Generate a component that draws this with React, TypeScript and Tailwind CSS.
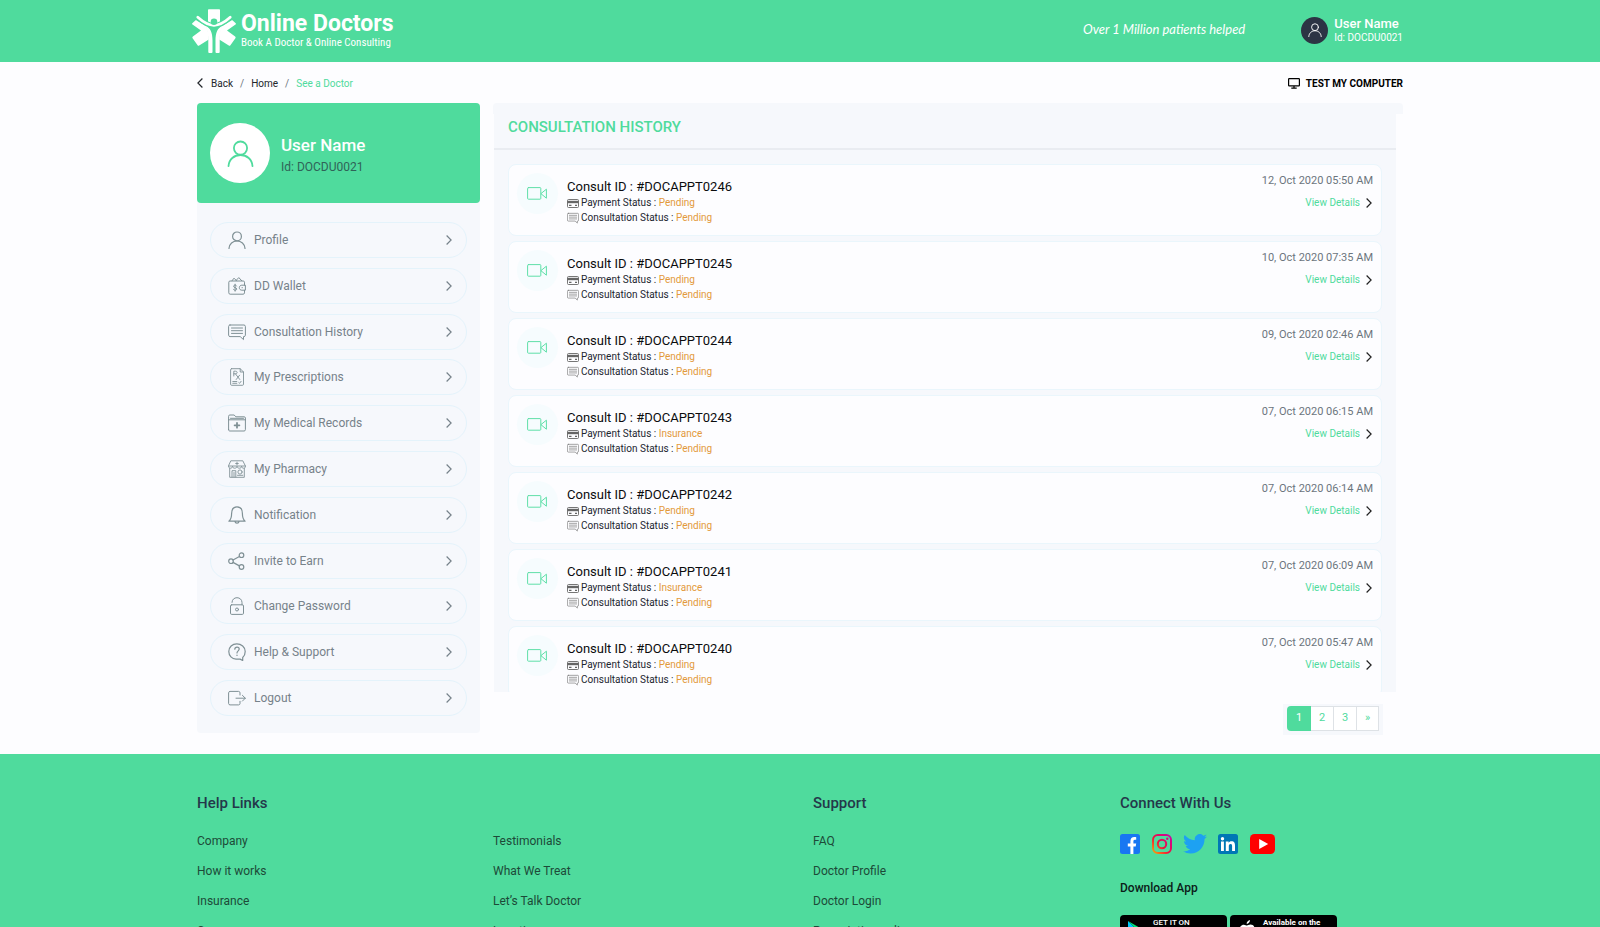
import React from "react";

type IconProps = { className?: string };

const stroke = {
  fill: "none",
  stroke: "currentColor",
  strokeWidth: 1.2,
  strokeLinecap: "round" as const,
  strokeLinejoin: "round" as const,
};

function UserIcon({ className }: IconProps) {
  return (
    <svg viewBox="0 0 18 18" className={className} {...stroke} aria-hidden="true">
      <circle cx="9" cy="5.4" r="4.4" />
      <path d="M1 17.4c.3-4.600 3.800-7.400 8-7.400s7.700 2.800 8 7.400" />
    </svg>
  );
}

function WalletIcon({ className }: IconProps) {
  return (
    <svg viewBox="0 0 18 18" className={className} {...stroke} strokeWidth={1} aria-hidden="true">
      <path d="M16.500 8.200V5.200c0-.7-.5-1.200-1.200-1.200H2C1.200 4 .8 4.500.8 5.200v10.600c0 .8.5 1.400 1.300 1.400h13c.8 0 1.400-.5 1.400-1.300v-2.600" />
      <path d="M17 8.200h-3.200c-1.400 0-2.500 1.100-2.500 2.500s1.100 2.500 2.500 2.500H17zM14 10.700h.4M4 3.800l2-2.600 2.600 2.600M8.200 3.300l2.600-2.700 3 3.200" />
      <path d="M8.600 9c-.3-.6-.8-.9-1.500-.9-.9 0-1.500.5-1.500 1.200 0 1.700 3.100.9 3.100 2.700 0 .8-.7 1.300-1.600 1.300-.8 0-1.400-.4-1.600-1M7.100 7.200v7" />
    </svg>
  );
}

function ChatIcon({ className }: IconProps) {
  return (
    <svg viewBox="0 0 18 18" className={className} {...stroke} strokeWidth={1} aria-hidden="true">
      <path d="M2 2h14c.8 0 1.400.6 1.400 1.400v8.800c0 .8-.6 1.400-1.400 1.400h-.5v3l-3.300-3H2c-.8 0-1.400-.6-1.400-1.400V3.400C.6 2.600 1.200 2 2 2z" />
      <path d="M3.500 5h11M3.500 7.700h11M3.500 10.400h11" />
    </svg>
  );
}

function PrescriptionIcon({ className }: IconProps) {
  return (
    <svg viewBox="0 0 18 18" className={className} {...stroke} strokeWidth={0.9} aria-hidden="true">
      <path d="M3.600.7h8.600l3.300 3.300v12.300c0 .6-.4 1-1 1H3.600c-.6 0-1-.4-1-1V1.700c0-.6.4-1 1-1zM12.200.7V4h3.300" />
      <path d="M5.800 8V3.200h1.700c1 0 1.600.5 1.600 1.300s-.6 1.300-1.600 1.300H5.800M7.400 5.800l4.400 5.700M11.600 7.200l-3.400 4.300M4.800 13.500h4M4.800 15.300h4M10.800 14.600l.8.7 1.500-2" />
    </svg>
  );
}

function RecordsIcon({ className }: IconProps) {
  return (
    <svg viewBox="0 0 18 18" className={className} {...stroke} strokeWidth={1} aria-hidden="true">
      <path d="M.6 15.700V2.300C.6 1.500 1 1 1.800 1h4.400l1.600 1.800h8.400c.7 0 1.200.5 1.200 1.200v11.700c0 .8-.5 1.300-1.300 1.300H1.900c-.8 0-1.300-.5-1.300-1.300zM.6 5.800h16.800M2.500 4.300h13" />
      <path d="M9 8.900v4.800M6.600 11.300h4.800" strokeWidth="1.800" />
    </svg>
  );
}

function PharmacyIcon({ className }: IconProps) {
  return (
    <svg viewBox="0 0 18 18" className={className} {...stroke} strokeWidth={0.9} aria-hidden="true">
      <path d="M3.200.8h11.600l2.700 5.400c0 1.300-.7 2-1.900 2s-2-.8-2-1.900c0 1.100-.9 1.900-2.200 1.900S9 7.400 9 6.300c0 1.100-1 1.900-2.300 1.900S4.500 7.400 4.500 6.300c0 1.100-.8 1.900-2 1.900S.5 7.500.5 6.200z" />
      <path d="M1.700 8.500v8.800h14.600V8.500M.7 6h16.600M9 2.200v2.600M7.700 3.500h2.600M4 17v-6.300h3.800V17M6 12.500V17" />
      <circle cx="12" cy="12" r="2.100" />
      <path d="M9.500 15.300h5.300" />
    </svg>
  );
}

function BellIcon({ className }: IconProps) {
  return (
    <svg viewBox="0 0 18 18" className={className} {...stroke} aria-hidden="true">
      <path d="M.9 15.200c2.200-1.700 2.700-3.300 2.700-7.600C3.600 3.400 5.600.9 9 .9s5.400 2.500 5.400 6.700c0 4.300.5 5.900 2.700 7.600zM7 15.600c.3 1.900 3.700 1.900 4 0" />
    </svg>
  );
}

function ShareIcon({ className }: IconProps) {
  return (
    <svg viewBox="0 0 18 18" className={className} {...stroke} aria-hidden="true">
      <circle cx="3" cy="9.200" r="2.300" />
      <circle cx="13.500" cy="3.200" r="2.300" />
      <circle cx="13.500" cy="15" r="2.300" />
      <path d="M5 8l6.400-3.600M5 10.400l6.400 3.500" />
    </svg>
  );
}

function LockIcon({ className }: IconProps) {
  return (
    <svg viewBox="0 0 18 18" className={className} {...stroke} strokeWidth={1} aria-hidden="true">
      <rect x="2.500" y="7.800" width="13" height="9.600" rx="1.200" />
      <path d="M4 5.400C4 2.600 6.200.7 9 .7s5 2 5 4.800v2.300" />
      <circle cx="9" cy="12.500" r="1.500" />
    </svg>
  );
}

function HelpIcon({ className }: IconProps) {
  return (
    <svg viewBox="0 0 18 18" className={className} {...stroke} aria-hidden="true">
      <path d="M14.700 14.500v3l-2.600-1.400H8C4 16 .8 12.800.8 8.500 .8 4 4.300.8 8.800.8s8.400 3.400 8.400 7.600c0 2.600-.9 4.600-2.500 6.100z" />
      <path d="M6.800 6.200c0-1.300.9-2.100 2.200-2.100s2.200.8 2.200 2c0 1.700-2.200 1.800-2.200 3.800M9 12.200v.2" />
    </svg>
  );
}

function LogoutIcon({ className }: IconProps) {
  return (
    <svg viewBox="0 0 18 18" className={className} {...stroke} strokeWidth={1} aria-hidden="true">
      <path d="M12 6V3.800c0-.8-.5-1.400-1.400-1.400H2c-.8 0-1.400.6-1.400 1.400v10.700c0 .8.6 1.400 1.400 1.400h8.600c.9 0 1.400-.6 1.400-1.400v-2.200M8 9.200h9.300M14.400 6.300l2.900 2.900-2.900 2.900" />
    </svg>
  );
}

function CardIcon({ className }: IconProps) {
  return (
    <svg viewBox="0 0 12 9" className={className} aria-hidden="true">
      <rect x=".5" y=".5" width="11" height="8" rx="1" fill="none" stroke="currentColor" strokeWidth=".9" />
      <path d="M.5 1.800h11v2.400H.5z" fill="currentColor" />
      <path d="M2 6.300h2.500M8 6.300h2" stroke="currentColor" strokeWidth="1.200" />
    </svg>
  );
}

function CameraIcon({ className }: IconProps) {
  return (
    <svg viewBox="0 0 20 13" className={className} {...stroke} strokeWidth={1} aria-hidden="true">
      <rect x=".6" y=".6" width="13.200" height="11.600" rx=".8" />
      <path d="M14.200 6.400l5.200-4.200v8.600z" />
    </svg>
  );
}

function Chevron({ className, left }: IconProps & { left?: boolean }) {
  return (
    <svg viewBox="0 0 6 10" className={className} fill="none" stroke="currentColor" strokeWidth="1.200" aria-hidden="true">
      <path d={left ? "M5.400.5L.9 5l4.500 4.500" : "M.6.5L5.100 5 .6 9.500"} />
    </svg>
  );
}

function Logo({ className }: IconProps) {
  const half =
    "M.3 14.300L3.300 11.500c.4-.3.8-.3 1.300 0L14 17.200c1.900 3.300 2.800 8 2.800 13.300L7.200 36.600c-.7.400-1.200.3-1.600-.4L.6 29.200c-.4-.7-.3-1.100.3-1.600L9 21.500.5 15.600c-.5-.4-.6-.9-.2-1.300z";
  const leg =
    "M13.500 16.800c5 2.200 7 7 7 14.700V43c0 .6-.3.9-.9.9h-2.400c-.6 0-.9-.3-.9-.9V31c0-5-.9-9.500-2.800-14.200z";
  return (
    <svg viewBox="0 0 44 44" className={className} aria-hidden="true">
      <g fill="#fff">
        <path d="M17 .3h10c.6 0 1 .4 1 1V13c-2 1.200-4 2-6 2.600-2-.6-4-1.400-6-2.600V1.300c0-.6.4-1 1-1z" />
        <path d={half} />
        <path d={leg} />
        <g transform="matrix(-1 0 0 1 44 0)">
          <path d={half} />
          <path d={leg} />
        </g>
      </g>
      <path d="M5.800 8.300C11 13 16.500 16.300 22 16.300S33 13 38.200 8.300" fill="none" stroke="#4fdb9d" strokeWidth="5" />
      <path d="M5.800 8.300C11 13 16.500 16.300 22 16.300S33 13 38.200 8.300" fill="none" stroke="#fff" strokeWidth="2.800" strokeLinecap="round" />
      <circle cx="22" cy="12.700" r="3.300" fill="#4fdb9d" />
    </svg>
  );
}

const menu = [
  { label: "Profile", Icon: UserIcon },
  { label: "DD Wallet", Icon: WalletIcon },
  { label: "Consultation History", Icon: ChatIcon },
  { label: "My Prescriptions", Icon: PrescriptionIcon },
  { label: "My Medical Records", Icon: RecordsIcon },
  { label: "My Pharmacy", Icon: PharmacyIcon },
  { label: "Notification", Icon: BellIcon },
  { label: "Invite to Earn", Icon: ShareIcon },
  { label: "Change Password", Icon: LockIcon },
  { label: "Help & Support", Icon: HelpIcon },
  { label: "Logout", Icon: LogoutIcon },
];

const consultations = [
  { id: "#DOCAPPT0246", payment: "Pending", date: "12, Oct 2020 05:50 AM" },
  { id: "#DOCAPPT0245", payment: "Pending", date: "10, Oct 2020 07:35 AM" },
  { id: "#DOCAPPT0244", payment: "Pending", date: "09, Oct 2020 02:46 AM" },
  { id: "#DOCAPPT0243", payment: "Insurance", date: "07, Oct 2020 06:15 AM" },
  { id: "#DOCAPPT0242", payment: "Pending", date: "07, Oct 2020 06:14 AM" },
  { id: "#DOCAPPT0241", payment: "Insurance", date: "07, Oct 2020 06:09 AM" },
  { id: "#DOCAPPT0240", payment: "Pending", date: "07, Oct 2020 05:47 AM" },
];

function Header() {
  return (
    <header className="bg-[#4fdb9d] text-white">
      <div className="mx-auto flex h-[62px] max-w-[1216px] items-center pr-[5px]">
        <a href="#" className="flex items-center gap-[5px]">
          <Logo className="h-11 w-11" />
          <span className="flex flex-col">
            <span className="text-[23px] leading-6 font-bold">Online Doctors</span>
            <span className="pb-px font-['Roboto_Condensed','Liberation_Sans_Narrow',Roboto,sans-serif] text-[11px] leading-[14px]">
              Book A Doctor &amp; Online Consulting
            </span>
          </span>
        </a>
        <p className="mr-[56px] ml-auto pb-[2px] font-[Lato,sans-serif] text-[13px] italic">Over 1 Million patients helped</p>
        <a href="#" className="flex items-center gap-[6px] pb-[2px]">
          <span className="flex h-[27px] w-[27px] items-center justify-center rounded-full bg-[#2c3444]">
            <UserIcon className="h-[14px] w-[14px]" />
          </span>
          <span className="flex flex-col">
            <span className="text-[13px] leading-4 font-medium">User Name</span>
            <span className="text-[10px] leading-3">Id: DOCDU0021</span>
          </span>
        </a>
      </div>
    </header>
  );
}

function Sidebar() {
  return (
    <aside className="flex h-[630px] w-[283px] shrink-0 flex-col rounded bg-[#f6f8fc]">
      <div className="flex h-[100px] items-center gap-[11px] rounded bg-[#4fdb9d] px-[13px]">
        <span className="flex h-[60px] w-[60px] items-center justify-center rounded-full bg-white text-[#4fdb9d]">
          <UserIcon className="h-[27px] w-[27px]" />
        </span>
        <div className="pt-1">
          <h2 className="text-[17px] leading-6 font-medium text-white">User Name</h2>
          <p className="text-[12px] leading-5 text-[#2f6358]">Id: DOCDU0021</p>
        </div>
      </div>
      <nav className="flex grow flex-col justify-between px-[13px] pt-[19px] pb-[17px]">
        {menu.map(({ label, Icon }) => (
          <a
            key={label}
            href="#"
            className="flex h-9 items-center rounded-full border border-[#e4f3fb] px-4 text-[12px] text-[#76828a]"
          >
            <Icon className="mr-2 ml-px h-[18px] w-[18px] text-[#7f9095]" />
            <span className="grow">{label}</span>
            <Chevron className="mr-[-2px] h-[10px] w-[6px]" />
          </a>
        ))}
      </nav>
    </aside>
  );
}

function ConsultationCard({ id, payment, date }: (typeof consultations)[number]) {
  return (
    <li className="flex h-[72px] shrink-0 items-start rounded-lg border border-[#eaf6fc] bg-[#fdfdff] pt-2 pr-2 pl-2">
      <span className="flex h-[41px] w-[41px] items-center justify-center rounded-full bg-[#f6fcfe] pr-px text-[#5fdfa8]">
        <CameraIcon className="h-[13px] w-5" />
      </span>
      <div className="ml-[9px] grow pt-[5px]">
        <h3 className="text-[13px] leading-[17px] text-[#0b0c0e]">Consult ID : {id}</h3>
        <p className="flex items-center text-[10px] leading-[15px] text-[#22262f]">
          <CardIcon className="mt-px mr-[2px] h-[9px] w-3 text-[#666]" />
          Payment Status :&nbsp;<span className="text-[#e39a3b]">{payment}</span>
        </p>
        <p className="flex items-center text-[10px] leading-[15px] text-[#22262f]">
          <ChatIcon className="mt-px mr-[2px] h-3 w-3 text-[#777]" />
          Consultation Status :&nbsp;<span className="text-[#e39a3b]">Pending</span>
        </p>
      </div>
      <div className="flex flex-col items-end text-[11px]">
        <time className="leading-4 text-[#6c757d]">{date}</time>
        <a href="#" className="mt-[6px] flex items-center gap-[6px] text-[10px] leading-4 text-[#4fdb9d]">
          View Details
          <Chevron className="mr-px h-[10px] w-[6px] text-[#222]" />
        </a>
      </div>
    </li>
  );
}

function History() {
  return (
    <section className="min-w-0 grow">
      <div className="h-[11px] rounded-t bg-[#f6f8fc]" />
      <div className="mr-[7px] ml-px bg-[#f6f8fc]">
        <h1 className="border-b-2 border-[#e9ecf1] pb-[8px] pl-[14px] text-[15px] leading-[26px] font-medium text-[#4fdb9d]">
          CONSULTATION HISTORY
        </h1>
        <ul className="flex h-[542px] flex-col gap-[5px] overflow-y-auto px-[14px] pt-[14px] [scrollbar-width:none]">
          {consultations.map((c) => (
            <ConsultationCard key={c.id} {...c} />
          ))}
        </ul>
      </div>
      <nav aria-label="Pages" className="mt-3 mr-5 flex justify-end">
        <div className="flex bg-[#f6f8fc] p-1 pt-[2px] text-[11px] text-[#4fdb9d]">
          <button className="h-[25px] w-6 rounded-l-sm bg-[#4fdb9d] text-white">1</button>
          <button className="h-[25px] w-[23px] border-y border-r border-[#dee2e6] bg-white">2</button>
          <button className="h-[25px] w-[23px] border-y border-r border-[#dee2e6] bg-white">3</button>
          <button className="h-[25px] w-[22px] border-y border-r border-[#dee2e6] bg-white">»</button>
        </div>
      </nav>
    </section>
  );
}

function LinkColumn({ title, links }: { title?: string; links: string[] }) {
  return (
    <div>
      <h2 className="h-6 text-[15px] leading-6 font-medium text-[#24384a]">{title}</h2>
      <ul className="mt-[11px]">
        {links.map((l) => (
          <li key={l} className="h-[30px]">
            <a href="#" className="text-[12px] leading-[30px] text-[#1d4a38]">
              {l}
            </a>
          </li>
        ))}
      </ul>
    </div>
  );
}

function Social() {
  return (
    <div className="mt-[19px] flex h-5 items-center">
      <a href="#" aria-label="Facebook" className="mr-3">
        <svg viewBox="0 0 20 20" className="h-5 w-5">
          <rect width="20" height="20" rx="2.500" fill="#1877f2" />
          <path d="M10.400 20v-7.500H7.800V9.400h2.600V7.200c0-2.700 1.500-4.200 3.900-4.200 1 0 1.900.2 1.900.2v2.500h-1.300c-1.200 0-1.500.8-1.500 1.500v2.200h2.800l-.5 3.100h-2.300V20z" fill="#fff" />
        </svg>
      </a>
      <a href="#" aria-label="Instagram" className="mr-[11px]">
        <svg viewBox="0 0 20 20" className="h-5 w-5" fill="none" stroke="url(#ig)" strokeWidth="2">
          <defs>
            <linearGradient id="ig" x1="0" y1="20" x2="20" y2="0" gradientUnits="userSpaceOnUse">
              <stop offset="0" stopColor="#ffb400" />
              <stop offset=".45" stopColor="#f0103c" />
              <stop offset="1" stopColor="#c400b8" />
            </linearGradient>
          </defs>
          <rect x="1" y="1" width="18" height="18" rx="4.800" />
          <circle cx="10" cy="10" r="4.200" />
          <circle cx="15.300" cy="4.700" r="1.200" fill="#d40a84" stroke="none" />
        </svg>
      </a>
      <a href="#" aria-label="Twitter" className="mr-[11px]">
        <svg viewBox="0 0 24 20" className="h-5 w-6">
          <path
            d="M24 2.400c-.9.4-1.800.7-2.800.8 1-.6 1.800-1.600 2.200-2.700-.9.600-2 1-3.100 1.200A4.900 4.900 0 0 0 11.900 6.200C7.800 6 4.200 4 1.700 1A4.900 4.900 0 0 0 3.200 7.500c-.8 0-1.600-.2-2.200-.6v.1c0 2.400 1.700 4.400 3.900 4.800-.7.200-1.500.2-2.200.1.600 1.900 2.400 3.300 4.600 3.400A9.900 9.900 0 0 1 0 17.300 14 14 0 0 0 7.500 19.500c9.100 0 14-7.500 14-14v-.6c1-.7 1.800-1.600 2.500-2.500z"
            fill="#1da1f2"
          />
        </svg>
      </a>
      <a href="#" aria-label="LinkedIn" className="mr-3">
        <svg viewBox="0 0 20 20" className="h-5 w-5">
          <rect width="20" height="20" rx="2.500" fill="#0077b5" />
          <path d="M3 7.600h2.900V17H3zM4.500 3a1.700 1.700 0 1 1 0 3.400 1.700 1.700 0 0 1 0-3.400zM7.800 7.600h2.800v1.300c.5-.9 1.500-1.600 2.900-1.600 2.900 0 3.500 1.900 3.500 4.500V17h-2.900v-4.600c0-1.100 0-2.500-1.500-2.500s-1.800 1.200-1.800 2.400V17h-3z" fill="#fff" />
        </svg>
      </a>
      <a href="#" aria-label="YouTube">
        <svg viewBox="0 0 25 20" className="h-5 w-[25px]">
          <rect width="25" height="20" rx="4.500" fill="#f00" />
          <path d="M9.200 5v10l9-5z" fill="#fff" />
        </svg>
      </a>
    </div>
  );
}

function Footer() {
  return (
    <footer className="mt-[19px] bg-[#4fdb9d]">
      <div className="mx-auto grid max-w-[1206px] grid-cols-[296fr_320fr_307fr_283fr] pt-[37px]">
        <LinkColumn title="Help Links" links={["Company", "How it works", "Insurance", "Careers"]} />
        <LinkColumn links={["Testimonials", "What We Treat", "Let’s Talk Doctor", "Locations"]} />
        <LinkColumn title="Support" links={["FAQ", "Doctor Profile", "Doctor Login", "Prescription policy"]} />
        <div>
          <h2 className="text-[15px] leading-6 font-medium text-[#24384a]">Connect With Us</h2>
          <Social />
          <h3 className="mt-6 text-[12px] leading-5 font-medium text-[#0b2018]">Download App</h3>
          <div className="mt-[17px] flex gap-[3px] text-[8px] leading-[10px] font-bold text-white">
            <a href="#" className="flex h-8 w-[107px] gap-3 rounded bg-black pt-[3px] pl-2">
              <svg viewBox="0 0 13 22" className="mt-[3px] h-[22px] w-[13px]" aria-hidden="true">
                <path d="M0 0l11 11L0 22z" fill="#00c8ff" />
                <path d="M0 0l13 7.500L11 11z" fill="#00e676" />
                <path d="M0 22l13-7.500L11 11z" fill="#ff3a44" />
              </svg>
              <span className="font-medium">GET IT ON</span>
            </a>
            <a href="#" className="flex h-8 w-[107px] gap-2 rounded bg-black pt-[3px] pl-[9px]">
              <svg viewBox="0 0 16 20" className="mt-[2px] h-5 w-4" fill="#fff" aria-hidden="true">
                <path d="M11 0c.2 1.700-1.400 3.900-3.300 3.900C7.400 2.200 9.200.2 11 0zM8 5.500c.7 0 1.900-1 3.500-1 1.500 0 3 .8 3.800 2.100-3.300 2-2.700 6.300.7 7.600-.8 2.200-2.500 5-4.300 5-1.400 0-1.700-.9-3.400-.9s-2.100.9-3.400.9C2.700 19.200 0 15 0 10.900 0 7 2.400 4.700 4.800 4.700c1.400 0 2.500.8 3.200.8z" />
              </svg>
              <span>Available on the</span>
            </a>
          </div>
        </div>
      </div>
    </footer>
  );
}

export default function App() {
  return (
    <div className="min-h-screen bg-[#fdfdff] font-[Roboto,sans-serif]">
      <Header />
      <main className="mx-auto max-w-[1206px]">
        <div className="flex h-[41px] items-center justify-between pt-px text-[10px]">
          <nav aria-label="Breadcrumb" className="flex items-center text-[#22262b]">
            <a href="#" className="flex items-center gap-2">
              <Chevron left className="h-[10px] w-[6px]" />
              Back
            </a>
            <span className="px-[7px] text-[#6c757d]">/</span>
            <a href="#">Home</a>
            <span className="px-[7px] text-[#6c757d]">/</span>
            <span className="text-[#4fdb9d]">See a Doctor</span>
          </nav>
          <button className="flex items-center gap-[6px] font-bold text-black">
            <svg viewBox="0 0 12 11" className="h-[11px] w-3" fill="none" stroke="currentColor" strokeWidth="1.200" aria-hidden="true">
              <rect x=".6" y=".6" width="10.800" height="7.300" rx=".6" />
              <path d="M6 8v2M3.300 10.200h5.400" />
            </svg>
            TEST MY COMPUTER
          </button>
        </div>
        <div className="flex items-start gap-[13px]">
          <Sidebar />
          <History />
        </div>
      </main>
      <Footer />
    </div>
  );
}
